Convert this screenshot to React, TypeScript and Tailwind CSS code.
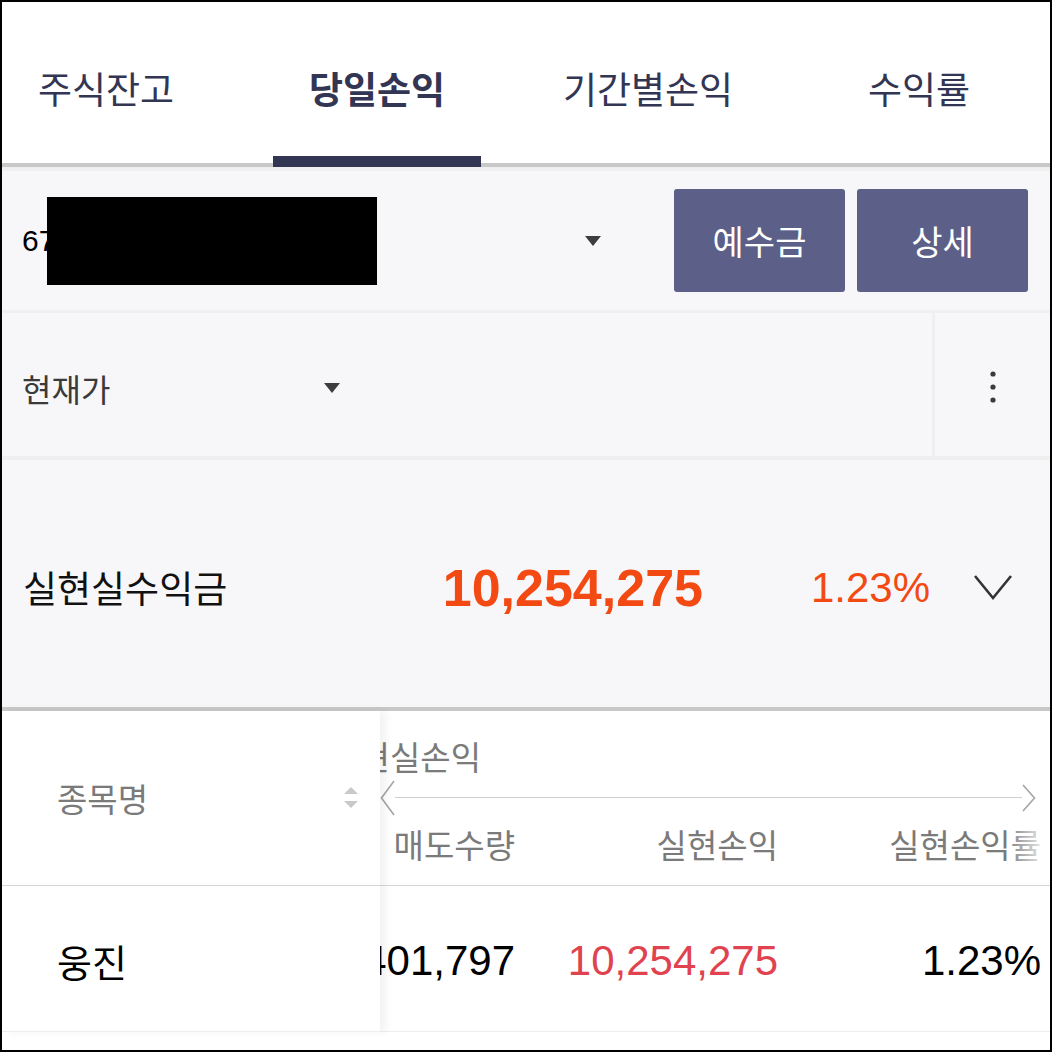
import React from "react";

const KR = "font-['Noto_Sans_CJK_KR',sans-serif]";
const NUM = "font-['Liberation_Sans','Noto_Sans_CJK_KR',sans-serif]";

const tabs = ["주식잔고", "당일손익", "기간별손익", "수익률"];

function Caret({ className = "" }: { className?: string }) {
  return (
    <svg width="16" height="10" viewBox="0 0 16 10" className={className}>
      <polygon points="0,0 16,0 8,10" fill="#3d3d3d" />
    </svg>
  );
}

function Kebab() {
  return (
    <svg width="8" height="32" viewBox="0 0 8 32">
      <circle cx="4" cy="3" r="2.6" fill="#3a3a3a" />
      <circle cx="4" cy="16" r="2.6" fill="#3a3a3a" />
      <circle cx="4" cy="29" r="2.6" fill="#3a3a3a" />
    </svg>
  );
}

function SortIcon() {
  return (
    <svg width="14" height="22" viewBox="0 0 14 22">
      <polygon points="7,0 14,7 0,7" fill="#c9c9c9" />
      <polygon points="0,14 14,14 7,21" fill="#c9c9c9" />
    </svg>
  );
}

export default function App() {
  return (
    <div className={`flex h-[1052px] w-[1052px] flex-col overflow-hidden border-2 border-black bg-white ${KR}`}>
      {/* tabs */}
      <div className="flex h-[161px] shrink-0 gap-[63px] bg-white">
        {tabs.map((t, i) => (
          <div
            key={t}
            className={`relative flex w-[208px] items-center justify-center pt-[12px] text-[37px] leading-none text-[#333653] ${
              i === 1 ? "font-bold" : "font-normal"
            }`}
          >
            {t}
            {i === 1 && <div className="absolute bottom-[-4px] left-0 right-0 h-[11px] bg-[#333653]" />}
          </div>
        ))}
      </div>
      <div className="h-[4px] shrink-0 bg-[#c8c8c8]" />
      <div className="h-[4px] shrink-0 bg-[#efeff0]" />

      {/* account row */}
      <div className="flex h-[139px] shrink-0 items-center bg-[#f7f7f9] pl-[20px] pr-[22px]">
        <div className="flex flex-1 items-center">
          <span className={`${NUM} text-[30px] leading-none text-black`}>67</span>
          <div className="-ml-[8px] h-[88px] w-[330px] bg-black" />
        </div>
        <Caret className="mr-[73px]" />
        <div className="flex gap-[12px]">
          <button className="flex h-[103px] w-[171px] items-center justify-center rounded-[3px] bg-[#5c5f87] text-[34px] leading-none text-white">
            예수금
          </button>
          <button className="flex h-[103px] w-[171px] items-center justify-center rounded-[3px] bg-[#5c5f87] text-[34px] leading-none text-white">
            상세
          </button>
        </div>
      </div>
      <div className="h-[3px] shrink-0 bg-[#efeff0]" />

      {/* price selector row */}
      <div className="flex h-[143px] shrink-0 bg-[#f7f7f9]">
        <div className="flex flex-1 items-center pl-[20px] pt-[6px]">
          <div className="flex w-[318px] items-center justify-between">
            <span className="text-[32px] leading-none text-[#3a3a3a]">현재가</span>
            <Caret />
          </div>
        </div>
        <div className="w-[3px] bg-[#efeff0]" />
        <div className="flex w-[115px] items-center justify-center pt-[4px]">
          <Kebab />
        </div>
      </div>
      <div className="h-[4px] shrink-0 bg-[#efeff0]" />

      {/* summary row */}
      <div className="flex h-[247px] shrink-0 items-center bg-[#f7f7f9] pl-[21px] pt-[8px]">
        <span className="flex-1 text-[37px] leading-none text-[#111]">실현실수익금</span>
        <span className={`${NUM} w-[300px] text-right text-[52px] font-bold leading-none text-[#f24a12]`}>
          10,254,275
        </span>
        <span className={`${NUM} w-[227px] text-right text-[42px] leading-none text-[#f24a12]`}>1.23%</span>
        <div className="flex w-[120px] items-center pl-[43px]">
          <svg width="40" height="27" viewBox="0 0 40 27">
            <polyline points="2,2 20,24 38,2" fill="none" stroke="#333" strokeWidth="2.6" />
          </svg>
        </div>
      </div>
      <div className="h-[4px] shrink-0 bg-[#c8c8c8]" />

      {/* table */}
      <div className="flex">
        <div className="relative z-10 w-[378px] shrink-0 bg-white shadow-[6px_0_8px_rgba(0,0,0,0.05)]">
          <div className="flex h-[175px] items-center justify-between border-b border-[#d6d6d6] pl-[55px] pr-[22px]">
            <span className="text-[33px] leading-none text-[#7a7a7a]">종목명</span>
            <SortIcon />
          </div>
          <div className="flex h-[146px] items-center border-b border-[#eeeeee] pl-[55px] pt-[4px]">
            <span className="text-[38px] leading-none text-black">웅진</span>
          </div>
        </div>

        <div className="relative flex-1 overflow-hidden">
          <div className="flex h-[175px] flex-col border-b border-[#d6d6d6]">
            <div className="flex h-[70px] w-[101px] items-center justify-end pt-[22px]">
              <span className="whitespace-nowrap text-[33px] leading-none text-[#7a7a7a]">실현실손익</span>
            </div>
            <div className="flex h-[34px] items-center pr-[14px]">
              <svg width="15" height="36" viewBox="0 0 15 36" className="shrink-0">
                <polyline points="14,1 1.5,18 14,35" fill="none" stroke="#a5a5a5" strokeWidth="1.6" />
              </svg>
              <div className="h-px flex-1 bg-[#cfcfcf]" />
              <svg width="14" height="28" viewBox="0 0 14 28" className="shrink-0">
                <polyline points="1,1 12.5,14 1,27" fill="none" stroke="#a5a5a5" strokeWidth="1.6" />
              </svg>
            </div>
            <div className="relative flex h-[71px] items-center pb-[11px] text-[33px] leading-none text-[#7a7a7a]">
              <div className="flex w-[135px] justify-end whitespace-nowrap">매도수량</div>
              <div className="flex w-[263px] shrink-0 justify-end whitespace-nowrap">실현손익</div>
              <div className="flex w-[263px] shrink-0 justify-end whitespace-nowrap">실현손익률</div>
              <div className="absolute bottom-0 right-0 top-0 w-[44px] bg-gradient-to-l from-white to-transparent" />
            </div>
          </div>
          <div className={`${NUM} flex h-[146px] items-center border-b border-[#eeeeee] pt-[4px] text-[42px] leading-none`}>
            <div className="flex w-[135px] shrink-0 justify-end whitespace-nowrap text-black">401,797</div>
            <div className="flex w-[263px] shrink-0 justify-end whitespace-nowrap text-[#e0434f]">10,254,275</div>
            <div className="flex w-[263px] shrink-0 justify-end whitespace-nowrap text-black">1.23%</div>
          </div>
        </div>
      </div>
      <div className="flex-1 bg-white" />
    </div>
  );
}
